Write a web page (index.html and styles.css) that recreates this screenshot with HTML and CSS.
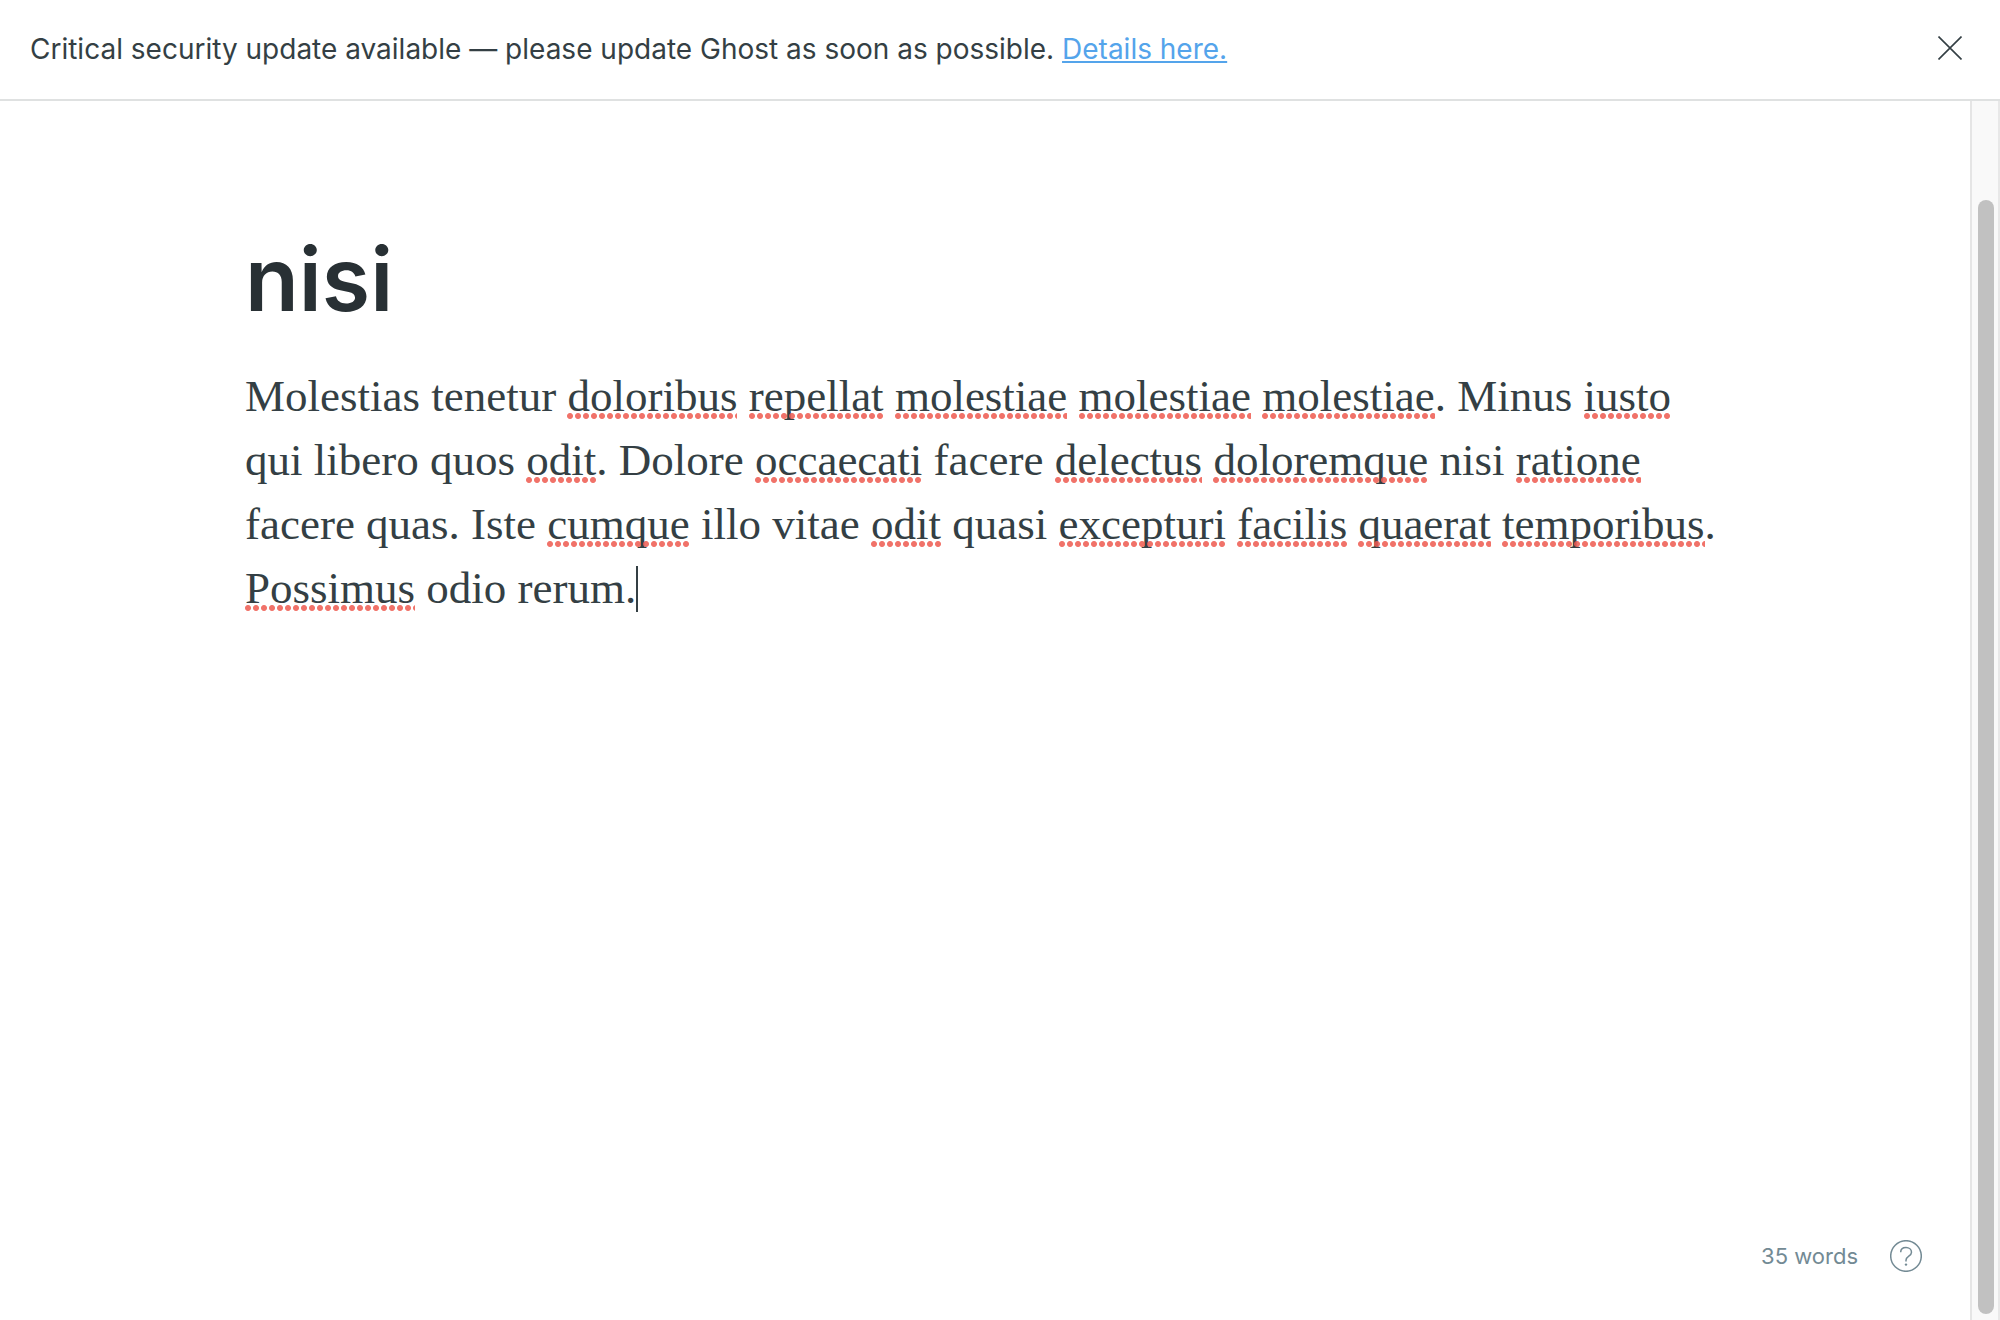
FILE: index.html
```html
<!DOCTYPE html>
<html lang="en">
<head>
<meta charset="utf-8">
<title>Editor - Ghost</title>
<link rel="stylesheet" href="styles.css">
</head>
<body>
<div class="app">
  <header class="alert">
    <p class="alert-text">Critical security update available — please update Ghost as soon as possible. <a class="alert-link" href="#details">Details here.</a></p>
    <button class="alert-close" type="button" aria-label="Close">
      <svg class="icon-close" viewBox="0 0 24 24" aria-hidden="true"><path d="M0.500 0.500L23.500 23.500M23.500 0.500L0.500 23.500"/></svg>
    </button>
  </header>
  <div class="workspace">
    <main class="editor">
      <article class="post">
        <input class="post-title" type="text" value="nisi" aria-label="Post title" spellcheck="false">
        <div class="post-body" contenteditable="true" spellcheck="false" role="textbox" aria-multiline="true" aria-label="Post content">
          <p>Molestias tenetur <span class="typo">doloribus</span> <span class="typo">repellat</span> <span class="typo">molestiae</span> <span class="typo">molestiae</span> <span class="typo">molestiae</span>. Minus <span class="typo">iusto</span> qui libero quos <span class="typo">odit</span>. Dolore <span class="typo">occaecati</span> facere <span class="typo">delectus</span> <span class="typo">doloremque</span> nisi <span class="typo">ratione</span> facere quas. Iste <span class="typo">cumque</span> illo vitae <span class="typo">odit</span> quasi <span class="typo">excepturi</span> <span class="typo">facilis</span> <span class="typo">quaerat</span> <span class="typo">temporibus</span>. <span class="typo">Possimus</span> odio rerum.<span class="caret"></span></p>
        </div>
      </article>
      <footer class="status">
        <span class="word-count">35 words</span>
        <a class="help" href="#help" aria-label="Help">
          <svg class="icon-help" viewBox="0 0 32 32" aria-hidden="true"><circle cx="16" cy="16" r="15.300"/><path d="M10.700 12.300C10.700 9.300 13 7.500 16 7.500C19 7.500 21.500 9.500 21.500 12.300C21.500 16.400 16 16 16 20.300V21.500"/><circle class="dot" cx="16" cy="24.600" r="1.200"/></svg>
        </a>
      </footer>
    </main>
    <div class="scroll-track" aria-hidden="true"><div class="scroll-thumb"></div></div>
  </div>
</div>
</body>
</html>
```
FILE: styles.css
```css
* {
  box-sizing: border-box;
}

body {
  margin: 0;
  background: #fff;
  color: #343f44;
  font-family: Inter, "Liberation Sans", sans-serif;
}

.app {
  display: flex;
  flex-direction: column;
  min-height: 100vh;
}

.alert {
  display: flex;
  align-items: flex-start;
  justify-content: space-between;
  padding: 24px 30px;
  border-bottom: 2px solid #dfe1e1;
}

.alert-text {
  margin: 0;
  font-size: 28px;
  line-height: 51px;
}

.alert-link {
  color: #54a4eb;
  text-decoration-thickness: 2px;
  text-underline-offset: 2px;
  text-decoration-skip-ink: none;
}

.alert-close {
  display: flex;
  padding: 12px 8px;
  border: 0;
  background: none;
  cursor: pointer;
}

.icon-close {
  width: 24px;
  height: 24px;
  fill: none;
  stroke: #343f44;
  stroke-width: 1.6;
}

.workspace {
  display: flex;
  flex: 1;
}

.editor {
  display: flex;
  flex: 1;
  flex-direction: column;
  justify-content: space-between;
}

.post {
  width: 100%;
  max-width: 1480px;
  margin: 0 auto;
  padding-top: 118px;
}

.post-title {
  display: block;
  width: 100%;
  height: 120px;
  padding: 0;
  border: 0;
  outline: 0;
  background: none;
  color: #283034;
  font: 600 88px Inter, "Liberation Sans", sans-serif;
}

.post-body {
  margin-top: 25px;
  outline: 0;
  font-family: "Liberation Serif", serif;
  font-size: 45px;
  line-height: 64px;
}

.post-body p {
  margin: 0;
}

.typo {
  position: relative;
}

.typo::after {
  content: "";
  position: absolute;
  right: 0;
  bottom: 2px;
  left: 0;
  height: 6px;
  background: radial-gradient(circle at 3px 3px, #ee5a4fd9 2.5px, #ee5a4f00 3.5px) 0 0 / 8px 6px;
}

.caret {
  display: inline-block;
  width: 2px;
  height: 46px;
  background: #343f44;
  vertical-align: -9px;
}

.status {
  display: flex;
  align-items: center;
  justify-content: flex-end;
  gap: 32px;
  padding: 0 48px 48px;
  color: #738a94;
  font-size: 22px;
}

.help {
  display: flex;
}

.icon-help {
  width: 32px;
  height: 32px;
  fill: none;
  stroke: #738a94;
  stroke-width: 1.5;
}

.icon-help .dot {
  fill: #738a94;
  stroke: none;
}

.scroll-track {
  display: flex;
  width: 30px;
  padding: 99px 4px 6px 6px;
  border-right: 2px solid #e8e8e8;
  border-left: 2px solid #e5e5e5;
  background: #f9f9f9;
}

.scroll-thumb {
  flex: 1;
  border-radius: 8px;
  background: #c1c1c1;
}
```
